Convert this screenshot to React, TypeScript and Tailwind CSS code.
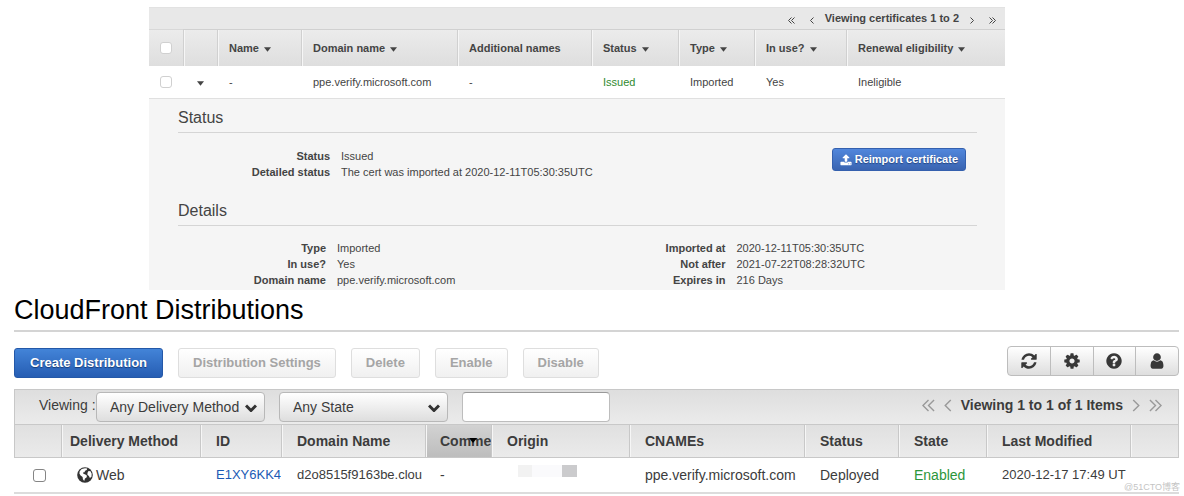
import type { ReactNode } from "react";

const ICONS = {
  refresh:
    "M1639 1056q0 5-1 7-64 268-268 434.5t-478 166.5q-146 0-282.5-55t-243.5-157l-129 129q-19 19-45 19t-45-19-19-45v-448q0-26 19-45t45-19h448q26 0 45 19t19 45-19 45l-137 137q71 66 161 102t187 36q134 0 250-65t186-179q11-17 53-117 8-23 30-23h192q13 0 22.5 9.5t9.5 22.5zm25-800v448q0 26-19 45t-45 19h-448q-26 0-45-19t-19-45 19-45l138-138q-148-137-349-137-134 0-250 65t-186 179q-11 17-53 117-8 23-30 23h-199q-13 0-22.5-9.5t-9.5-22.5v-7q65-268 270-434.5t480-166.5q146 0 284 55.5t245 156.5l130-129q19-19 45-19t45 19 19 45z",
  settings:
    "M1152 896q0-106-75-181t-181-75-181 75-75 181 75 181 181 75 181-75 75-181zm512-109v222q0 12-8 23t-20 13l-185 28q-19 54-39 91 35 50 107 138 10 12 10 25t-9 23q-27 37-99 108t-94 71q-12 0-26-9l-138-108q-44 23-91 38-16 136-29 186-7 28-36 28h-222q-14 0-24.5-8.5t-11.5-21.5l-28-184q-49-16-90-37l-141 107q-10 9-25 9-14 0-25-11-126-114-165-168-7-10-7-23 0-12 8-23 15-21 51-66.5t54-70.5q-27-50-41-99l-183-27q-13-2-21-12.5t-8-23.5v-222q0-12 8-23t19-13l186-28q14-46 39-92-40-57-107-138-10-12-10-24 0-10 9-23 26-36 98.5-107.5t94.5-71.5q13 0 26 10l138 107q44-23 91-38 16-136 29-186 7-28 36-28h222q14 0 24.5 8.5t11.5 21.5l28 184q49 16 90 37l142-107q9-9 24-9 13 0 25 10 129 119 165 170 7 8 7 22 0 12-8 23-15 21-51 66.5t-54 70.5q26 50 41 98l183 28q13 2 21 12.5t8 23.5z",
  help: "M1024 1376v-192q0-14-9-23t-23-9h-192q-14 0-23 9t-9 23v192q0 14 9 23t23 9h192q14 0 23-9t9-23zm256-672q0-88-55.5-163t-138.5-116-170-41q-243 0-371 213-15 24 8 42l132 100q7 6 19 6 16 0 25-12 53-68 86-92 34-24 86-24 48 0 85.5 26t37.5 59q0 38-20 61t-68 45q-63 28-115.5 86.5t-52.5 125.5v36q0 14 9 23t23 9h192q14 0 23-9t9-23q0-19 21.5-49.5t54.5-49.5q32-18 49-28.5t46-35 44.5-48 28-60.5 12.5-81zm384 192q0 209-103 385.5t-279.5 279.5-385.5 103-385.5-103-279.5-279.5-103-385.5 103-385.5 279.5-279.5 385.5-103 385.5 103 279.5 279.5 103 385.5z",
  user: "M1536 1399q0 109-62.5 187t-150.5 78h-854q-88 0-150.5-78t-62.5-187q0-85 8.5-160.5t31.5-152 58.5-131 94-89 134.5-34.5q131 128 313 128t313-128q76 0 134.5 34.5t94 89 58.5 131 31.5 152 8.5 160.5zm-256-887q0 159-112.5 271.5t-271.5 112.5-271.5-112.5-112.5-271.5 112.5-271.5 271.5-112.5 271.5 112.5 112.5 271.5z",
  upload:
    "M1344 1472q0-26-19-45t-45-19-45 19-19 45 19 45 45 19 45-19 19-45zm256 0q0-26-19-45t-45-19-45 19-19 45 19 45 45 19 45-19 19-45zm128-224v320q0 40-28 68t-68 28h-1472q-40 0-68-28t-28-68v-320q0-40 28-68t68-28h427q21 56 70.5 92t110.5 36h256q61 0 110.5-36t70.5-92h427q40 0 68 28t28 68zm-325-648q-17 40-59 40h-256v448q0 26-19 45t-45 19h-256q-26 0-45-19t-19-45v-448h-256q-42 0-59-40-17-39 14-69l448-448q18-19 45-19t45 19l448 448q31 30 14 69z",
};

function Icon({ name, className }: { name: keyof typeof ICONS; className: string }) {
  return (
    <svg viewBox="0 0 1792 1792" fill="currentColor" className={className} aria-hidden="true">
      <path d={ICONS[name]} />
    </svg>
  );
}

function Globe() {
  return (
    <svg viewBox="0 0 16 16" className="h-4 w-4 shrink-0" aria-hidden="true">
      <circle cx="8" cy="8" r="7.8" fill="#333" />
      <path d="M8 1.2l2.200.3-.5 1.500-1.600.8-.6 1.400-1.500.4.400 1.200 2 .6 1.600 1.400-.5 1.600-1.500 1.200-.8 2.300-1.300-1.600-.3-2.200-2-1.500-1.200-2 .3-2.300 2-2.300z" fill="#fff" />
      <path d="M11.500 4l2 .2 1.200 2.500-.2 3-1.600 1.200-1-2-1.500-1.200.1-2z" fill="#fff" />
    </svg>
  );
}

function Chevrons({ double = false, left = false, className }: { double?: boolean; left?: boolean; className: string }) {
  return (
    <svg
      viewBox={double ? "0 0 14 14" : "0 0 8 14"}
      fill="none"
      stroke="currentColor"
      className={`${className} ${left ? "-scale-x-100" : ""}`}
      aria-hidden="true"
    >
      <path d={double ? "M1 1l6 6-6 6M7 1l6 6-6 6" : "M1 1l6 6-6 6"} />
    </svg>
  );
}

function Caret() {
  return (
    <svg viewBox="0 0 8 5" className="mt-[2px] h-[5px] w-[7px] shrink-0" fill="#444" aria-hidden="true">
      <path d="M0 0h8L4 5z" />
    </svg>
  );
}

const certColumns = [
  { label: "Name", width: "w-[84px]", sortable: true },
  { label: "Domain name", width: "w-[156px]", sortable: true },
  { label: "Additional names", width: "w-[134px]", sortable: false },
  { label: "Status", width: "w-[87px]", sortable: true },
  { label: "Type", width: "w-[76px]", sortable: true },
  { label: "In use?", width: "w-[92px]", sortable: true },
  { label: "Renewal eligibility", width: "", sortable: true },
];

const certRow = ["-", "ppe.verify.microsoft.com", "-", "Issued", "Imported", "Yes", "Ineligible"];

function DetailList({ items, columns }: { items: [string, string][]; columns: string }) {
  return (
    <dl className={`grid ${columns} gap-x-[11px] text-[11px] leading-4`}>
      {items.map(([label, value]) => (
        <div key={label} className="col-span-2 grid grid-cols-subgrid">
          <dt className="text-right font-bold">{label}</dt>
          <dd>{value}</dd>
        </div>
      ))}
    </dl>
  );
}

function SectionTitle({ children }: { children: ReactNode }) {
  return <h2 className="border-b border-[#d5d5d5] pb-1 text-base leading-5">{children}</h2>;
}

function CertificatePanel() {
  return (
    <section className="ml-[149px] mr-[179px] mt-[7px] bg-[#f5f5f5] text-[#444]">
      <div className="flex h-[22px] items-center justify-end gap-[11px] border-t border-[#e2e2e2] bg-[#e8e8e8] pr-[9px] text-[11px]">
        <button type="button" aria-label="First page"><Chevrons double left className="mr-1 mt-1 h-[7px] w-[7px] stroke-2" /></button>
        <button type="button" aria-label="Previous page"><Chevrons left className="mt-1 h-[7px] w-1 stroke-2" /></button>
        <span className="font-bold">Viewing certificates 1 to 2</span>
        <button type="button" aria-label="Next page"><Chevrons className="mt-1 h-[7px] w-1 stroke-2" /></button>
        <button type="button" aria-label="Last page"><Chevrons double className="ml-1 mt-1 h-[7px] w-[7px] stroke-2" /></button>
      </div>

      <table className="w-full table-fixed border-separate border-spacing-0 text-left text-[11px]">
        <thead>
          <tr className="h-[37px] bg-linear-to-b from-[#ececec] to-[#dedede]">
            <th className="w-[34px] border-t border-[#d8d8d8] pl-[11px]">
              <input type="checkbox" aria-label="Select all certificates" className="block h-3 w-3 appearance-none rounded-[3px] border border-[#d0d0d0] bg-white" />
            </th>
            <th className="w-[34px] border-l border-t border-[#d0d0d0] shadow-[inset_1px_0_#f6f6f6]" aria-label="Expand" />
            {certColumns.map((col) => (
              <th key={col.label} className={`${col.width} border-l border-t border-[#d0d0d0] pl-[11px] shadow-[inset_1px_0_#f6f6f6]`}>
                <span className="flex items-center gap-[5px] whitespace-nowrap">
                  {col.label}
                  {col.sortable && <Caret />}
                </span>
              </th>
            ))}
          </tr>
        </thead>
        <tbody>
          <tr className="h-[33px] bg-white">
            <td className="border-b border-[#e0e0e0] pl-[11px]">
              <input type="checkbox" aria-label="Select ppe.verify.microsoft.com" className="block h-3 w-3 appearance-none rounded-[3px] border border-[#d0d0d0] bg-white" />
            </td>
            <td className="border-b border-[#e0e0e0] pl-[14px]">
              <button type="button" aria-label="Collapse details" className="block"><Caret /></button>
            </td>
            {certRow.map((cell, i) => (
              <td key={certColumns[i].label} className={`border-b border-[#e0e0e0] pl-3 ${cell === "Issued" ? "text-[#2f8a2f]" : ""}`}>
                {cell}
              </td>
            ))}
          </tr>
        </tbody>
      </table>

      <div className="pb-[2px] pl-[29px] pr-7 pt-[9px]">
        <SectionTitle>Status</SectionTitle>
        <div className="flex justify-between pb-[21px] pr-[11px] pt-[15px]">
          <DetailList
            columns="grid-cols-[152px_auto]"
            items={[
              ["Status", "Issued"],
              ["Detailed status", "The cert was imported at 2020-12-11T05:30:35UTC"],
            ]}
          />
          <button
            type="button"
            className="flex h-[23px] items-center gap-[3px] rounded-[3px] border border-[#3460ae] bg-linear-to-b from-[#5187dc] to-[#3a64b1] px-[7px] text-[11px] font-bold text-white text-shadow-[0_1px_1px_#244580]"
          >
            <Icon name="upload" className="h-3 w-3" />
            Reimport certificate
          </button>
        </div>
        <SectionTitle>Details</SectionTitle>
        <div className="grid grid-cols-2 pt-[14px]">
          <DetailList
            columns="grid-cols-[148px_auto]"
            items={[
              ["Type", "Imported"],
              ["In use?", "Yes"],
              ["Domain name", "ppe.verify.microsoft.com"],
            ]}
          />
          <DetailList
            columns="grid-cols-[148px_auto]"
            items={[
              ["Imported at", "2020-12-11T05:30:35UTC"],
              ["Not after", "2021-07-22T08:28:32UTC"],
              ["Expires in", "216 Days"],
            ]}
          />
        </div>
      </div>
    </section>
  );
}

function FilterSelect({ label, width }: { label: string; width: string }) {
  return (
    <span className={`relative ${width}`}>
      <select
        aria-label={label}
        className="h-[30px] w-full appearance-none rounded border border-[#b8b8b8] bg-linear-to-b from-white to-[#dedede] pl-[13px] text-sm"
      >
        <option>{label}</option>
      </select>
      <svg viewBox="0 0 12 8" className="pointer-events-none absolute right-2 top-3 h-2 w-3" fill="none" stroke="#333" strokeWidth="3" aria-hidden="true">
        <path d="M1 1.500l5 5 5-5" />
      </svg>
    </span>
  );
}

const distColumns = [
  { label: "Delivery Method", width: "w-[139px]", pad: "pl-2" },
  { label: "ID", width: "w-[81px]", pad: "pl-[15px]" },
  { label: "Domain Name", width: "w-[144px]", pad: "pl-[15px]" },
  { label: "Comme", width: "w-[66px]", pad: "pl-[14px]" },
  { label: "Origin", width: "w-[138px]", pad: "pl-[15px]" },
  { label: "CNAMEs", width: "w-[175px]", pad: "pl-[15px]" },
  { label: "Status", width: "w-[94px]", pad: "pl-[15px]" },
  { label: "State", width: "w-[88px]", pad: "pl-[15px]" },
  { label: "Last Modified", width: "w-[144px]", pad: "pl-[15px]" },
];

const toolbarIcons = [
  { name: "refresh", label: "Refresh" },
  { name: "settings", label: "Settings" },
  { name: "help", label: "Help" },
  { name: "user", label: "Account" },
] as const;

function DistributionToolbar() {
  return (
    <div className="mt-4 flex justify-between">
      <div className="flex gap-[15px] text-[13px] font-bold">
        <button
          type="button"
          className="h-[30px] rounded-[3px] border border-[#2458a8] bg-linear-to-b from-[#4384d8] to-[#265db3] px-[15px] text-white text-shadow-[0_1px_1px_#183b75]"
        >
          Create Distribution
        </button>
        {["Distribution Settings", "Delete", "Enable", "Disable"].map((label) => (
          <button
            key={label}
            type="button"
            disabled
            className="h-[30px] rounded-[3px] border border-[#dedede] bg-linear-to-b from-white to-[#f0f0f0] px-[14px] text-[#a5a5a5]"
          >
            {label}
          </button>
        ))}
      </div>
      <div className="-mt-[2px] flex h-[30px] w-[172px] divide-x divide-[#bdbdbd] rounded border border-[#bdbdbd] bg-linear-to-b from-white to-[#dedede] text-[#383838]">
        {toolbarIcons.map((icon) => (
          <button key={icon.name} type="button" aria-label={icon.label} className="flex flex-1 items-center justify-center">
            <Icon name={icon.name} className="h-[18px] w-[18px]" />
          </button>
        ))}
      </div>
    </div>
  );
}

function DistributionTable() {
  return (
    <table className="w-full table-fixed border-separate border-spacing-0 text-left text-sm">
      <thead>
        <tr className="h-[33px] bg-linear-to-b from-[#e0e0e0] to-[#ebebeb]">
          <th className="w-[47px] border-b border-l border-[#c8c8c8]" aria-label="Select" />
          {distColumns.map((col) => (
            <th
              key={col.label}
              className={`${col.width} ${col.pad} relative overflow-hidden border-b border-l border-[#c8c8c8] shadow-[inset_1px_0_#f6f6f6] ${
                col.label === "Comme" ? "bg-linear-to-b from-[#d2d2d2] to-[#bdbdbd]" : ""
              }`}
            >
              <span className="whitespace-nowrap">{col.label}</span>
              {col.label === "Comme" && (
                <svg viewBox="0 0 8 5" className="absolute left-[43px] top-[13px] h-[5px] w-2" aria-hidden="true">
                  <path d="M0 0h8L4 5z" />
                </svg>
              )}
            </th>
          ))}
          <th className="border-x border-b border-[#c8c8c8] shadow-[inset_1px_0_#f6f6f6]" aria-label="Actions" />
        </tr>
      </thead>
      <tbody>
        <tr className="h-9 *:overflow-hidden *:whitespace-nowrap *:border-b-2 *:border-[#dcdcdc]">
          <td className="pl-[19px]">
            <input type="checkbox" aria-label="Select E1XY6KK4" className="block h-[13px] w-[13px] appearance-none rounded-[3px] border border-[#858585] bg-white" />
          </td>
          <td className="pl-4">
            <span className="flex items-center gap-[3px]"><Globe />Web</span>
          </td>
          <td className="pl-4 text-[13px]"><a href="#E1XY6KK4" className="text-[#1b5bb5]">E1XY6KK4</a></td>
          <td className="pl-4 text-[13px]">d2o8515f9163be.clou</td>
          <td className="pl-[15px]">-</td>
          <td className="pl-[27px]">
            <span className="mb-2 flex h-3 w-[59px]">
              <span className="w-[14px] bg-[#f2f2f2]" />
              <span className="w-[30px] bg-[#fafafc]" />
              <span className="w-[15px] bg-[#cbcbcd]" />
            </span>
          </td>
          <td className="pl-4">ppe.verify.microsoft.com</td>
          <td className="pl-4">Deployed</td>
          <td className="pl-4 text-[#2c963b]">Enabled</td>
          <td className="pl-4 text-[13px]">2020-12-17 17:49 UT</td>
          <td />
        </tr>
      </tbody>
    </table>
  );
}

function DistributionsPanel() {
  return (
    <section className="ml-[14px] mr-[5px] text-[#3c3c3c]">
      <h1 className="border-b-2 border-[#d4d4d4] pb-[5px] pt-[5px] text-[27px] leading-[30px] text-black">CloudFront Distributions</h1>
      <DistributionToolbar />
      <div className="mt-[11px] flex h-9 justify-between border border-[#c8c8c8] bg-linear-to-b from-[#dedede] to-[#ebebeb]">
        <div className="flex pl-6 pt-[2px] text-sm">
          <span className="w-[57px] pt-[3px]">Viewing :</span>
          <FilterSelect label="Any Delivery Method" width="w-[169px]" />
          <span className="w-[14px]" />
          <FilterSelect label="Any State" width="w-[169px]" />
          <input type="text" aria-label="Filter distributions" className="ml-[14px] h-[30px] w-[148px] rounded border border-[#bdbdbd] border-t-[#999] bg-white px-2" />
        </div>
        <div className="flex items-center gap-[9px] pb-1 pr-4 text-sm">
          <button type="button" aria-label="First page" className="text-[#999]"><Chevrons double left className="h-[13px] w-[13px] stroke-[1.5]" /></button>
          <button type="button" aria-label="Previous page" className="text-[#999]"><Chevrons left className="h-[13px] w-2 stroke-[1.5]" /></button>
          <span className="font-bold">Viewing 1 to 1 of 1 Items</span>
          <button type="button" aria-label="Next page" className="text-[#999]"><Chevrons className="h-[13px] w-2 stroke-[1.5]" /></button>
          <button type="button" aria-label="Last page" className="text-[#999]"><Chevrons double className="h-[13px] w-[13px] stroke-[1.5]" /></button>
        </div>
      </div>
      <DistributionTable />
    </section>
  );
}

export default function App() {
  return (
    <main className="relative min-h-screen overflow-hidden bg-white font-['Liberation_Sans',Arial,sans-serif]">
      <CertificatePanel />
      <DistributionsPanel />
      <span className="absolute bottom-[3px] right-1 font-['Liberation_Sans','Noto_Sans_CJK_SC',sans-serif] text-[9px] leading-3 text-[#c4c4c4]">
        @51CTO博客
      </span>
    </main>
  );
}
